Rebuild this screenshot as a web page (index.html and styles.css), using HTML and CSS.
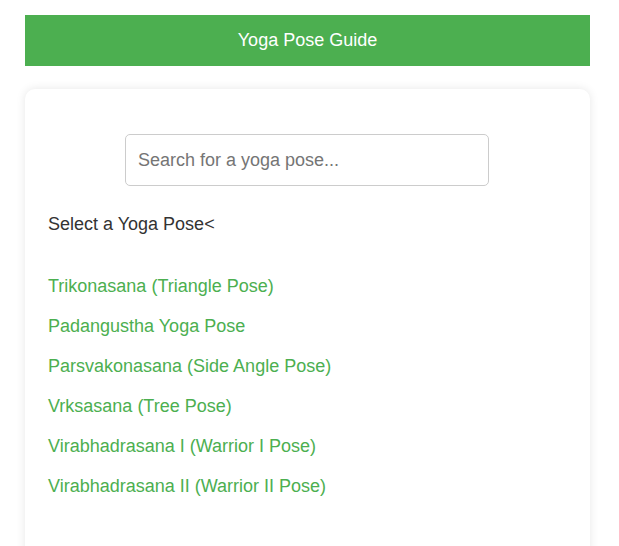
FILE: index.html
```html
<!DOCTYPE html>
<html>
<head>
<meta charset="utf-8">
<link rel="stylesheet" href="styles.css">
</head>
<body>
<div class="page">
  <header class="header">Yoga Pose Guide</header>
  <main class="card">
    <div class="search-row">
      <input class="search" type="text" placeholder="Search for a yoga pose...">
    </div>
    <div class="label">Select a Yoga Pose&lt;</div>
    <ul class="poses">
      <li><a href="#">Trikonasana (Triangle Pose)</a></li>
      <li><a href="#">Padangustha Yoga Pose</a></li>
      <li><a href="#">Parsvakonasana (Side Angle Pose)</a></li>
      <li><a href="#">Vrksasana (Tree Pose)</a></li>
      <li><a href="#">Virabhadrasana I (Warrior I Pose)</a></li>
      <li><a href="#">Virabhadrasana II (Warrior II Pose)</a></li>
    </ul>
  </main>
</div>
</body>
</html>
```
FILE: styles.css
```css
html, body {
  margin: 0;
  padding: 0;
  background: #ffffff;
  font-family: "Liberation Sans", Arial, sans-serif;
}
.page {
  width: 565px;
  margin: 15px 0 0 25px;
}
.header {
  padding: 15px 0;
  background: #4caf50;
  color: #ffffff;
  font-size: 18px;
  text-align: center;
}
.card {
  margin-top: 23px;
  background: #ffffff;
  border-radius: 10px;
  box-shadow: 0 0 10px rgba(0, 0, 0, 0.1);
  padding: 45px 24px 60px 23px;
}
.search-row {
  display: flex;
  justify-content: center;
}
.search {
  width: 364px;
  height: 52px;
  box-sizing: border-box;
  border: 1px solid #cccccc;
  border-radius: 5px;
  padding: 0 12px;
  font-family: "Liberation Sans", Arial, sans-serif;
  font-size: 18px;
  color: #333333;
  outline: none;
}
.search::placeholder {
  color: #757575;
}
.label {
  margin-top: 27px;
  font-size: 18px;
  line-height: 22px;
  color: #333333;
}
.poses {
  list-style: none;
  margin: 31px 0 0 0;
  padding: 0;
}
.poses li {
  height: 40px;
  display: flex;
  align-items: center;
  font-size: 18px;
}
.poses a {
  color: #4caf50;
  text-decoration: none;
}
```
